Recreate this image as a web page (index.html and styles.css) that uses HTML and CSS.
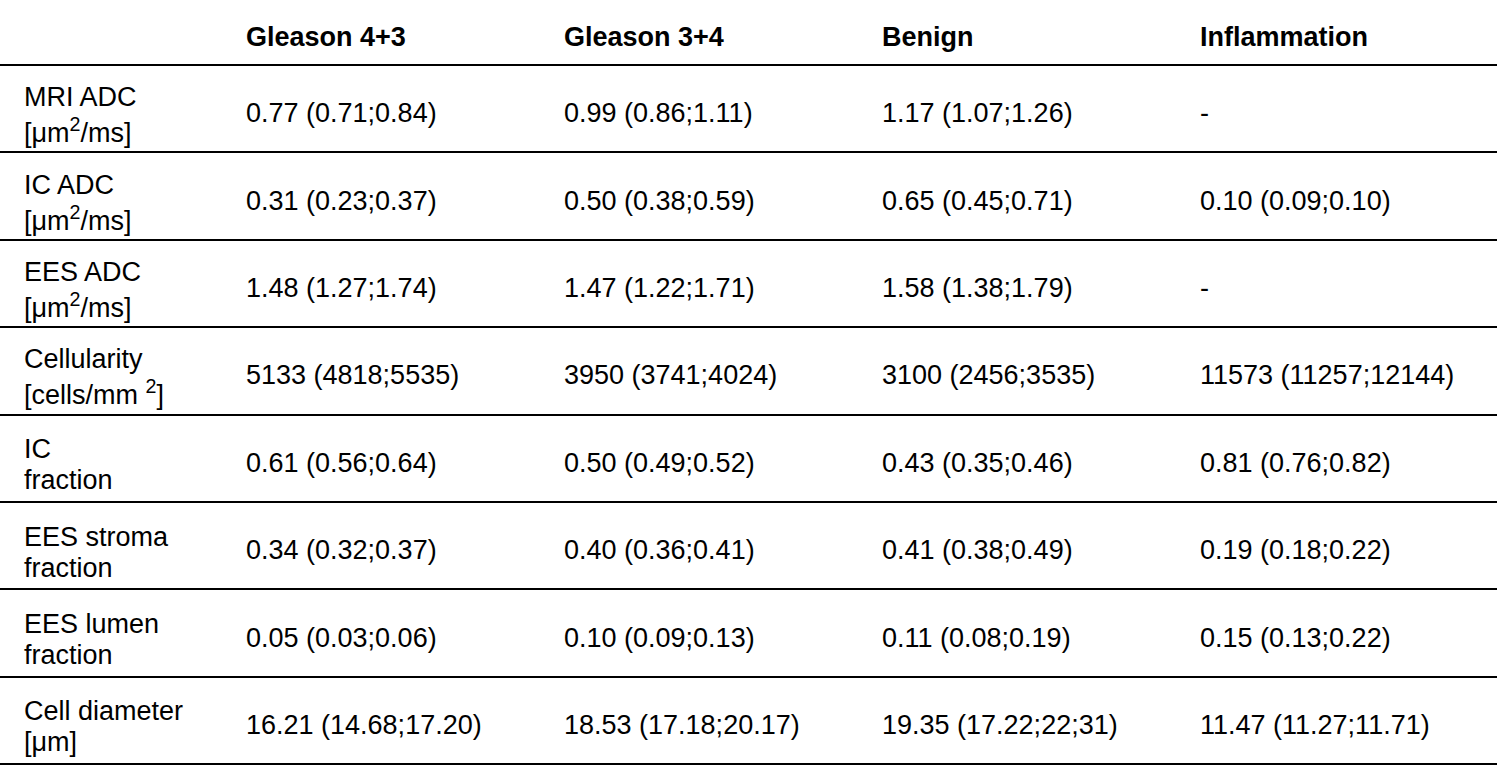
FILE: index.html
```html
<!DOCTYPE html>
<html lang="en">
<head>
<meta charset="utf-8">
<title>Tissue parameters</title>
<link rel="stylesheet" href="styles.css">
</head>
<body>
<div class="table">
  <div class="row head">
    <div class="cell"></div>
    <div class="cell">Gleason 4+3</div>
    <div class="cell">Gleason 3+4</div>
    <div class="cell">Benign</div>
    <div class="cell">Inflammation</div>
  </div>
  <div class="row">
    <div class="cell label">MRI ADC<br>[μm<sup>2</sup>/ms]</div>
    <div class="cell">0.77 (0.71;0.84)</div>
    <div class="cell">0.99 (0.86;1.11)</div>
    <div class="cell">1.17 (1.07;1.26)</div>
    <div class="cell">-</div>
  </div>
  <div class="row">
    <div class="cell label">IC ADC<br>[μm<sup>2</sup>/ms]</div>
    <div class="cell">0.31 (0.23;0.37)</div>
    <div class="cell">0.50 (0.38;0.59)</div>
    <div class="cell">0.65 (0.45;0.71)</div>
    <div class="cell">0.10 (0.09;0.10)</div>
  </div>
  <div class="row">
    <div class="cell label">EES ADC<br>[μm<sup>2</sup>/ms]</div>
    <div class="cell">1.48 (1.27;1.74)</div>
    <div class="cell">1.47 (1.22;1.71)</div>
    <div class="cell">1.58 (1.38;1.79)</div>
    <div class="cell">-</div>
  </div>
  <div class="row">
    <div class="cell label">Cellularity<br>[cells/mm <sup>2</sup>]</div>
    <div class="cell">5133 (4818;5535)</div>
    <div class="cell">3950 (3741;4024)</div>
    <div class="cell">3100 (2456;3535)</div>
    <div class="cell">11573 (11257;12144)</div>
  </div>
  <div class="row">
    <div class="cell label">IC<br>fraction</div>
    <div class="cell">0.61 (0.56;0.64)</div>
    <div class="cell">0.50 (0.49;0.52)</div>
    <div class="cell">0.43 (0.35;0.46)</div>
    <div class="cell">0.81 (0.76;0.82)</div>
  </div>
  <div class="row">
    <div class="cell label">EES stroma<br>fraction</div>
    <div class="cell">0.34 (0.32;0.37)</div>
    <div class="cell">0.40 (0.36;0.41)</div>
    <div class="cell">0.41 (0.38;0.49)</div>
    <div class="cell">0.19 (0.18;0.22)</div>
  </div>
  <div class="row">
    <div class="cell label">EES lumen<br>fraction</div>
    <div class="cell">0.05 (0.03;0.06)</div>
    <div class="cell">0.10 (0.09;0.13)</div>
    <div class="cell">0.11 (0.08;0.19)</div>
    <div class="cell">0.15 (0.13;0.22)</div>
  </div>
  <div class="row">
    <div class="cell label">Cell diameter<br>[μm]</div>
    <div class="cell">16.21 (14.68;17.20)</div>
    <div class="cell">18.53 (17.18;20.17)</div>
    <div class="cell">19.35 (17.22;22;31)</div>
    <div class="cell">11.47 (11.27;11.71)</div>
  </div>
</div>
</body>
</html>
```
FILE: styles.css
```css
html, body {
  margin: 0;
  padding: 0;
  background: #fff;
}
body {
  font-family: "Liberation Sans", Arial, sans-serif;
  font-size: 27px;
  color: #000;
}
.table {
  width: 1497px;
}
.row {
  display: grid;
  grid-template-columns: 222px 318px 318px 318px 321px;
  height: 87.4px;
  box-sizing: border-box;
  border-bottom: 2px solid #000;
  align-items: center;
  padding-top: 10px;
}
.row.head {
  height: 66px;
  font-weight: bold;
}
.cell {
  padding-left: 24px;
  white-space: nowrap;
}
.cell.label {
  padding-top: 4px;
}
sup {
  font-size: 0.73em;
  vertical-align: 0.55em;
  line-height: normal;
}
```
